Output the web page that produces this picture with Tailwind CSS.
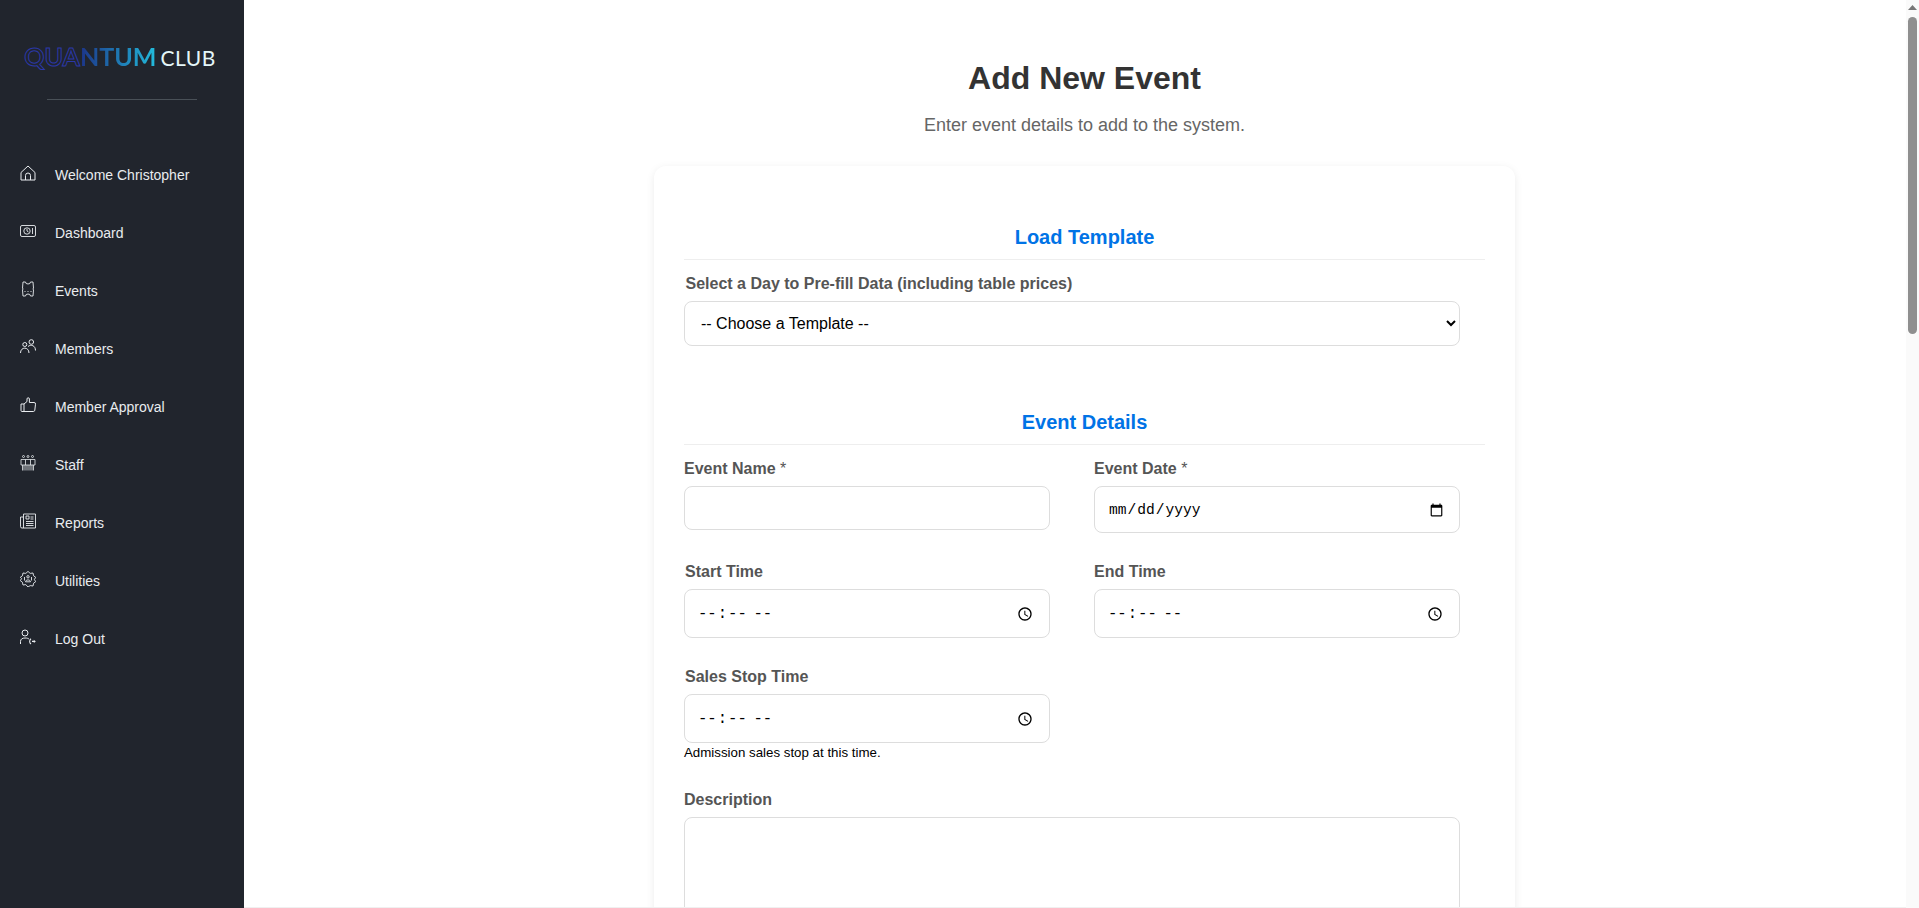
<!DOCTYPE html>
<html lang="en">
<head>
    <meta charset="UTF-8">
    <meta name="viewport" content="width=device-width, initial-scale=1.0">
    <title>Add New Event</title>
    <script src="https://cdn.jsdelivr.net/npm/@tailwindcss/browser@4"></script>
</head>
<body class="bg-white font-['Liberation_Sans',Arial,sans-serif]">

    <!-- sidebar -->
    <aside class="fixed z-10 top-0 left-0 h-screen w-[244px] bg-[#21252d] text-[#e9ecef]">
        <div class="h-[100px] mx-[47px] border-b border-[#495057] flex items-start justify-center pt-[41px]">
            <div class="flex items-baseline whitespace-nowrap font-['Lato',sans-serif] text-[25px] leading-[30px] font-bold pr-[4px]">
                <span class="text-[#21252d] [-webkit-text-stroke:1px_#2b38a8]">QUA</span>
                <span class="bg-gradient-to-r from-[#1c3488] to-[#23bcdc] bg-clip-text text-transparent">NTUM</span>
                <span class="ml-[4px] text-[#e4f6f8] font-normal text-[21px] tracking-[0.5px]">CLUB</span>
            </div>
        </div>

        <nav class="mt-[46px] flex flex-col text-[14px] leading-[20px]">
            <a class="h-[58px] flex items-center pl-[20px] gap-[19px]">
                <svg class="w-[16px] h-[16px] -mt-[5px]" viewBox="0 0 16 16" fill="none" stroke="currentColor"><path d="M8 1 1 7.500V15h14V7.500zM5.500 15v-4.500a2.500 2.500 0 0 1 5 0V15" stroke-linejoin="round"/></svg>
                <span>Welcome Christopher</span>
            </a>
            <a class="h-[58px] flex items-center pl-[20px] gap-[19px]">
                <svg class="w-[16px] h-[16px] -mt-[5px]" viewBox="0 0 16 16" fill="none" stroke="currentColor" stroke-width="0.9"><rect x="0.500" y="2.500" width="15" height="11" rx="1.500"/><circle cx="7" cy="8" r="3.200"/><path d="M7 6v2l1.500 1M12.500 5v6"/></svg>
                <span>Dashboard</span>
            </a>
            <a class="h-[58px] flex items-center pl-[20px] gap-[19px]">
                <svg class="w-[16px] h-[16px] -mt-[5px]" viewBox="0 0 16 16" fill="none" stroke="currentColor" stroke-width="0.9"><path d="M3 1h2.500a2.500 2 0 0 0 5 0H13l.5 6-.5 1 .5 1L13 15h-2.500a2.500 2 0 0 0-5 0H3l-.5-6 .5-1-.5-1z"/><path d="M4.500 10.500h1M7.500 10.500h1M10.500 10.500h1"/></svg>
                <span>Events</span>
            </a>
            <a class="h-[58px] flex items-center pl-[20px] gap-[19px]">
                <svg class="w-[16px] h-[16px] -mt-[5px]" viewBox="0 0 16 16" fill="none" stroke="currentColor"><circle cx="4.800" cy="5.500" r="2"/><circle cx="11.300" cy="3" r="2.300"/><path d="M.5 14c0-6.500 8.500-6.500 8.500 0M8 7.500c3-2.500 7.500-1 7.500 4"/></svg>
                <span>Members</span>
            </a>
            <a class="h-[58px] flex items-center pl-[20px] gap-[19px]">
                <svg class="w-[16px] h-[16px] -mt-[5px]" viewBox="0 0 16 16" fill="none" stroke="currentColor"><path d="M1 7h3v7.500H2A1 1 0 0 1 1 13.500zM4 7l3-2.500V2a1.200 1.200 0 0 1 2.400 0v3.500H14a1.500 1.500 0 0 1 1.500 1.700l-.7 6A1.500 1.500 0 0 1 13.300 14.500H4"/></svg>
                <span>Member Approval</span>
            </a>
            <a class="h-[58px] flex items-center pl-[20px] gap-[19px]">
                <svg class="w-[16px] h-[16px] -mt-[5px]" viewBox="0 0 16 16" fill="none" stroke="currentColor" stroke-width="0.8"><circle cx="3.500" cy="1.500" r="1"/><circle cx="8" cy="1.500" r="1"/><circle cx="12.500" cy="1.500" r="1"/><path d="M1 4.500h14v5.500H1zM5.500 4.500v5.500M10.500 4.500v5.500M2.500 10v5.500M4 10v5.500M6 10v5.500M8 10v5.500M10 10v5.500M12 10v5.500M13.500 10v5.500"/></svg>
                <span>Staff</span>
            </a>
            <a class="h-[58px] flex items-center pl-[20px] gap-[19px]">
                <svg class="w-[16px] h-[16px] -mt-[5px]" viewBox="0 0 16 16" fill="none" stroke="currentColor" stroke-width="0.9"><path d="M3.500 1h12v14H2A1.500 1.500 0 0 1 .5 13.500V4h3zM3.500 4v11"/><path d="M6 3h3v3H6zM10.500 4h3M10.500 6h3M6 8.500h7.500M6 10.500h7.500M6 12.500h7.500"/></svg>
                <span>Reports</span>
            </a>
            <a class="h-[58px] flex items-center pl-[20px] gap-[19px]">
                <svg class="w-[16px] h-[16px] -mt-[5px]" viewBox="0 0 16 16" fill="none" stroke="currentColor" stroke-width="0.9"><path d="M8 .4 10.200 2.400l2.800-.4.6 2.800 2.100 1.500-1.300 2.200 1.300 2.200-2.100 1.500-.6 2.800-2.800-.4L8 16l-2.200-2.400-2.800.4-.6-2.800L.3 9.700l1.300-2.200L.3 6.300l2.100-1.500.6-2.800 2.800.4z"/><circle cx="8" cy="5.800" r="1.200"/><path d="M5.500 10.800c0-2.500 5-2.500 5 0zM4.500 6v3.500M11.500 6v3.500"/></svg>
                <span>Utilities</span>
            </a>
            <a class="h-[58px] flex items-center pl-[20px] gap-[19px]">
                <svg class="w-[16px] h-[16px] -mt-[5px]" viewBox="0 0 16 16" fill="none" stroke="currentColor"><circle cx="5" cy="4" r="3"/><path d="M.5 15v-2.500C.5 10 2.500 9 5 9s3 .5 4 1"/><path d="M11 9.800c-1.800 1.200-1.800 4 0 5.200" stroke-width="1.100"/><path d="M12 12.400h2" stroke-width="1.200"/><path d="M13.800 10.800l2 1.600-2 1.600z" fill="currentColor" stroke="none"/></svg>
                <span>Log Out</span>
            </a>
        </nav>
    </aside>

    <!-- content -->
    <main class="ml-[244px] pl-[6px] pt-[58px] pb-[40px]">
        <h1 class="text-[32px] leading-[40px] font-bold text-[#333] text-center">Add New Event</h1>
        <p class="mt-[17px] text-[18px] leading-[20px] text-[#666] text-center">Enter event details to add to the system.</p>

        <div class="mt-[31px] mx-auto w-[861px] min-h-[2300px] bg-white rounded-xl shadow-[0_2px_8px_rgba(0,0,0,0.08)] px-[30px] pt-[59px]">
            <h2 class="text-[20px] leading-[24px] font-bold text-[#0073e6] text-center pb-[10px] border-b border-[#eee]">Load Template</h2>
            <label class="block mt-[14px] ml-[1.500px] text-[16px] leading-[19px] font-bold text-[#555]">Select a Day to Pre-fill Data (including table prices)</label>
            <select class="block mt-[8px] w-[776px] h-[45px] pl-[12px] pr-[4px] bg-white border border-[#ddd] rounded-lg text-[16px] text-black">
                <option>-- Choose a Template --</option>
            </select>

            <h2 class="mt-[64px] text-[20px] leading-[24px] font-bold text-[#0073e6] text-center pb-[10px] border-b border-[#eee]">Event Details</h2>

            <div class="mt-[14px] w-[776px] grid grid-cols-2 gap-x-[44px] items-start">
                <div>
                    <label class="block text-[16px] leading-[19px] font-bold text-[#555]">Event Name <span class="font-normal">*</span></label>
                    <input type="text" class="block mt-[8px] w-full h-[44px] px-[13px] bg-white border border-[#ddd] rounded-lg text-[16px]">
                </div>
                <div>
                    <label class="block text-[16px] leading-[19px] font-bold text-[#555]">Event Date <span class="font-normal">*</span></label>
                    <input type="date" class="block mt-[8px] w-full h-[47px] pl-[13px] pr-[13px] pt-[2px] bg-white border border-[#ddd] rounded-lg text-[14.600px] font-['Liberation_Mono',monospace]">
                </div>
                <div class="mt-[29px]">
                    <label class="block ml-[1px] text-[16px] leading-[19px] font-bold text-[#555]">Start Time</label>
                    <input type="time" class="block mt-[8px] w-full h-[49px] pl-[12px] pr-[13px] pt-[2px] bg-white border border-[#ddd] rounded-lg text-[15.600px] font-['Liberation_Mono',monospace]">
                </div>
                <div class="mt-[29px]">
                    <label class="block text-[16px] leading-[19px] font-bold text-[#555]">End Time</label>
                    <input type="time" class="block mt-[8px] w-full h-[49px] pl-[12px] pr-[13px] pt-[2px] bg-white border border-[#ddd] rounded-lg text-[15.600px] font-['Liberation_Mono',monospace]">
                </div>
                <div class="mt-[29px]">
                    <label class="block ml-[1px] text-[16px] leading-[19px] font-bold text-[#555]">Sales Stop Time</label>
                    <input type="time" class="block mt-[8px] w-full h-[49px] pl-[12px] pr-[13px] pt-[2px] bg-white border border-[#ddd] rounded-lg text-[15.600px] font-['Liberation_Mono',monospace]">
                    <p class="mt-[2px] text-[13.300px] leading-[15px] text-black">Admission sales stop at this time.</p>
                </div>
            </div>

            <label class="block mt-[30px] text-[16px] leading-[19px] font-bold text-[#555]">Description</label>
            <textarea class="block mt-[8px] w-[776px] h-[150px] px-[13px] py-[10px] bg-white border border-[#ddd] rounded-lg text-[16px]"></textarea>
        </div>
    </main>

    <!-- browser scrollbar as captured in the screenshot -->
    <div class="fixed z-20 top-0 right-0 bottom-0 w-[13px] bg-[#fafafa]">
        <svg class="absolute top-[5px] left-[2px] w-[9px] h-[5px]" viewBox="0 0 9 5"><path d="M4.500 0 9 5H0z" fill="#777"/></svg>
        <div class="absolute top-[17px] left-[2px] w-[9px] h-[317px] rounded-full bg-[#8f8f8f]"></div>
    </div>
    <div class="fixed z-0 bottom-0 left-[244px] right-[13px] h-px bg-[#f0f0f0]"></div>

</body>
</html>
